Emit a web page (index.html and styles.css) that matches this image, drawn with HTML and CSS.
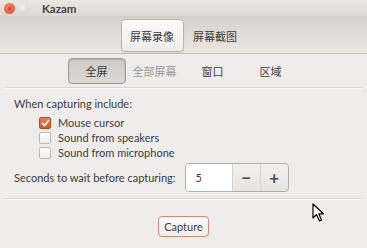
FILE: index.html
```html
<!DOCTYPE html>
<html lang="zh-CN">
<head>
    <meta charset="UTF-8">
    <title>Kazam</title>
    <link rel="stylesheet" href="styles.css">
</head>
<body>
    <div class="window">
        <div class="titlebar">
            <span class="wbtn close">×</span>
            <span class="wbtn min"></span>
            <b class="title">Kazam</b>
        </div>
        <div class="toolbar">
            <button class="tab active">屏幕录像</button>
            <button class="tab">屏幕截图</button>
        </div>
        <main>
            <div class="modes">
                <button class="mode active">全屏</button>
                <button class="mode off">全部屏幕</button>
                <button class="mode">窗口</button>
                <button class="mode">区域</button>
            </div>
            <div class="sep"></div>
            <div class="options">
                <p class="heading">When capturing include:</p>
                <label class="check"><span class="box on"><svg width="9" height="8" viewBox="0 0 9 8"><path d="M1 4.2 L3.4 6.5 L8 1.2" fill="none" stroke="#fff" stroke-width="1.8"/></svg></span>Mouse cursor</label>
                <label class="check"><span class="box"></span>Sound from speakers</label>
                <label class="check"><span class="box"></span>Sound from microphone</label>
                <div class="delay">
                    <span>Seconds to wait before capturing:</span>
                    <div class="spin">
                        <span class="value">5</span>
                        <span class="step">&minus;</span>
                        <span class="step">+</span>
                    </div>
                </div>
            </div>
            <div class="sep"></div>
            <div class="footer">
                <button class="capture">Capture</button>
            </div>
        </main>
        <svg class="cursor" width="14" height="20" viewBox="0 0 14 20">
            <path d="M1 1 L1 15 L4.5 11.5 L7.5 18 L9.5 17 L6.8 10.8 L11.5 10.8 Z" fill="#fff" stroke="#000" stroke-width="1.2" stroke-linejoin="round"/>
        </svg>
    </div>
</body>
</html>
```

FILE: styles.css
```css
body {
    margin: 0;
    background-color: #efedeb;
    font-family: "Lato", "Noto Sans CJK SC", sans-serif;
    font-size: 11px;
    color: #3c3c3c;
}
.window {
    position: relative;
    width: 367px;
    height: 248px;
    overflow: hidden;
}
.titlebar {
    display: flex;
    align-items: center;
    height: 16px;
    padding-left: 4px;
    background: linear-gradient(#ebe8e4, #dcd8d3);
}
.wbtn {
    width: 11px;
    height: 11px;
    border-radius: 50%;
    margin-right: 3px;
    font-size: 8px;
    line-height: 11px;
    text-align: center;
    color: #7a2a17;
}
.close {
    background: radial-gradient(circle at 40% 35%, #f48a6a, #df4a24);
}
.min {
    background: radial-gradient(circle at 40% 35%, #f6f4f1, #cfcbc6);
}
.title {
    margin-left: 10px;
    font-size: 11.5px;
    color: #444;
}
.toolbar {
    display: flex;
    justify-content: center;
    height: 34px;
    padding-top: 3px;
    background: linear-gradient(#d4d0ca, #e3e0db 60%, #e8e5e1);
    border-bottom: 1px solid #c4bfb8;
}
button {
    font-family: inherit;
    font-size: 11px;
    color: #3c3c3c;
    background: none;
    border: 1px solid transparent;
    margin: 0;
    padding: 0;
}
.tab, .mode {
    font-family: "Noto Sans CJK SC", sans-serif;
    font-size: 11px;
}
.tab {
    width: 63px;
    height: 33px;
    border-radius: 4px;
}
.tab.active {
    background: linear-gradient(#fbfaf9, #efedea);
    border-color: #b9b4ae;
    box-shadow: 0 1px 1px rgba(0, 0, 0, 0.08);
}
main {
    padding-top: 4px;
}
.modes {
    display: flex;
    justify-content: center;
}
.mode {
    width: 58px;
    height: 26px;
    border-radius: 4px;
}
.mode.active {
    background: linear-gradient(#cfccc8, #dcd9d5);
    border-color: #9f9a94;
    box-shadow: inset 0 1px 2px rgba(0, 0, 0, 0.15);
}
.mode.off {
    color: #9a9896;
}
.sep {
    height: 1px;
    margin: 3px 5px 0 5px;
    background-color: #d9d6d2;
    border-bottom: 1px solid #fbfaf9;
}
.options {
    padding: 8px 14px 0 14px;
}
.heading {
    margin: 0 0 4px 0;
    line-height: 14px;
}
.check {
    display: flex;
    align-items: center;
    height: 15px;
    margin-left: 25px;
}
.box {
    display: flex;
    align-items: center;
    justify-content: center;
    width: 10px;
    height: 10px;
    margin-right: 7px;
    border: 1px solid #bdb8b2;
    border-radius: 2px;
    background: linear-gradient(#ffffff, #efedeb);
}
.box.on {
    border-color: #b64a24;
    background: linear-gradient(#ee7a52, #d9522a);
}
.delay {
    display: flex;
    align-items: center;
    margin-top: 3px;
    margin-bottom: 6px;
}
.spin {
    display: flex;
    margin-left: 9px;
    height: 27px;
    border: 1px solid #b3aea8;
    border-radius: 4px;
    background: linear-gradient(#f3f1ef, #e6e3e0);
}
.value {
    width: 36px;
    padding-left: 10px;
    line-height: 27px;
    background-color: #fff;
    border-radius: 3px 0 0 3px;
    border-right: 1px solid #d6d2ce;
}
.step {
    width: 27px;
    line-height: 27px;
    text-align: center;
    font-size: 17px;
    font-weight: bold;
    color: #4a4a4a;
}
.step + .step {
    border-left: 1px solid #d6d2ce;
}
.footer {
    display: flex;
    justify-content: center;
    padding-top: 16px;
}
.capture {
    width: 51px;
    height: 21px;
    border-color: #d0897a;
    border-radius: 4px;
    background: linear-gradient(#fbfaf9, #efedea);
}
.cursor {
    position: absolute;
    left: 312px;
    top: 203px;
}
```
